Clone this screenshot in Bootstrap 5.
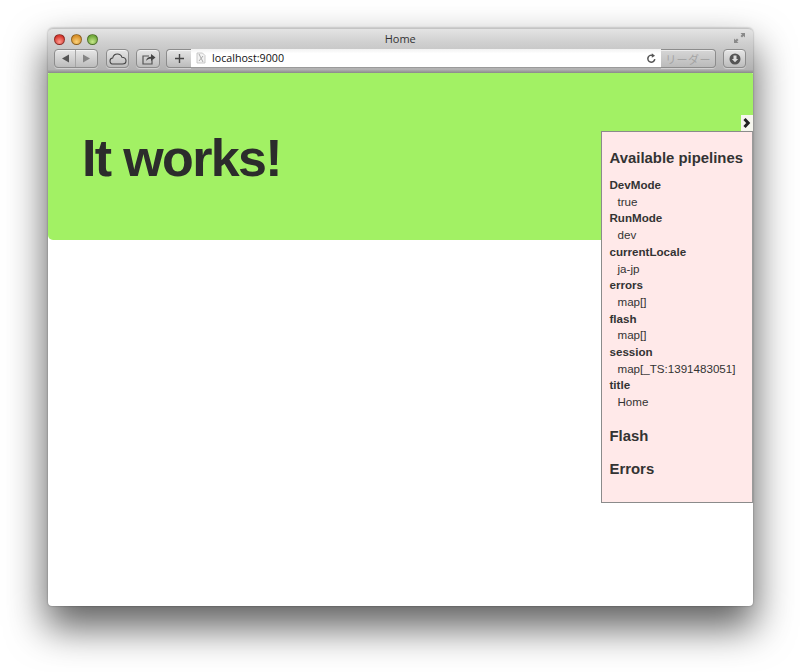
<!DOCTYPE html>
<html lang="en"><head><meta charset="utf-8"><title>Home</title>
<link rel="stylesheet" href="https://cdn.jsdelivr.net/npm/bootstrap@5.3.0/dist/css/bootstrap.min.css">
<style>
html,body{height:100%;background:#fff;overflow:hidden}
body{padding:28px 47.5px 0 47.5px;font-family:"Liberation Sans",Arial,sans-serif;color:#333}
.win{width:705px;height:578px;border-radius:5px 5px 4px 4px;box-shadow:0 20px 38px 2px rgba(0,0,0,.62),0 0 2px rgba(0,0,0,.4);background:#fff}
.chrome{height:45px;border-radius:5px 5px 0 0;background:linear-gradient(#e4e4e4,#d0d0d0 30%,#b2b2b2 92%,#8a8a8a);border-top:1px solid #c4c4c4;padding:0 6px 0 6.5px}
.titlerow{height:20px}
.light{width:11px;height:11px;border-radius:50%;border:1px solid rgba(0,0,0,.35)}
.lr{background:radial-gradient(circle at 50% 75%,#ff9c90,#d8382f 70%)}
.ly{background:radial-gradient(circle at 50% 75%,#fbd27c,#d9912a 70%)}
.lg{background:radial-gradient(circle at 50% 75%,#c6e88a,#72aa3c 70%)}
.wintitle{font:11px "Open Sans",sans-serif;color:#333;left:0;right:0;top:2px}
.lightsbox{gap:5.5px}
.toolrow{height:19px}
.tbtn{height:19px;border:1px solid #8c8c8c;border-radius:4px;background:linear-gradient(#e6e6e6,#bcbcbc);box-shadow:inset 0 1px 0 rgba(255,255,255,.55),0 1px 0 rgba(255,255,255,.4);color:#444;flex:none}
.w-nav{width:44px;margin-right:8px}
.w-cloud{width:23px;margin-right:7px}
.w-share{width:24px;margin-right:6px}
.w-plus{width:25px;border-radius:4px 0 0 4px;border-right:0}
.w-reader{width:55px;border-radius:0 4px 4px 0;color:#a4a4a4;font:11px "Noto Sans CJK JP",sans-serif;letter-spacing:.4px;border-left:0;background:linear-gradient(#d6d6d6,#bbb)}
.w-dl{width:23px;margin-left:7px}
.navsplit{border-right:1px solid #a5a5a5;height:100%}
.urlbar{width:470px;height:19px;background:linear-gradient(#f2f2f2,#fff 25%);flex:none;border-bottom:1px solid #9a9a9a;color:#222;padding:0 4px 0 5px}
.urltext{margin-left:6px;font:10.7px "Open Sans",sans-serif;color:#111}
.viewport{height:533px}
.hero{height:167px;background:#a2f164;border-radius:1px 1px 0 5px/1px 1px 0 5px;padding:59px 0 0 34.5px}
.bigtitle{font:700 52px/1 "Liberation Sans",sans-serif;color:#2c2c2c;letter-spacing:-1.65px;margin:0}
.panel{position:absolute;right:0;top:58px;width:152px;height:372px;background:#ffe9e9;border:1px solid #8b8b8b;border-right-color:#9a9a9a;padding:17px 0 0 8px;color:#333}
.toggler{position:absolute;right:0;top:42px;width:12px;height:16px;background:#f6f6ee}
.phead{font:700 14.9px/18px "Liberation Sans",sans-serif;margin:0 0 10px;color:#333}
.plist{margin:0;font-size:11.6px;line-height:16.7px}
.plist dt{font-weight:700}
.plist dd{margin:0 0 0 8px}
.phead2{margin:18.500px 0 0;height:15px;line-height:15px}
.phead3{margin-top:18px}
</style></head>
<body>
<div class="win position-relative">
  <div class="chrome">
    <div class="titlerow position-relative d-flex align-items-center">
      <div class="d-flex lightsbox"><span class="light lr"></span><span class="light ly"></span><span class="light lg"></span></div>
      <div class="wintitle position-absolute text-center">Home</div>
      <svg class="position-absolute" style="right:1px;top:3px" width="13" height="12" viewBox="0 0 13 12"><path d="M7.5 1H12V5.5L10.5 4 9 5.5 7.5 4 9 2.5ZM5.500 11H1V6.500L2.500 8 4 6.500 5.500 8 4 9.500Z" fill="#8a8a8a"/></svg>
    </div>
    <div class="toolrow d-flex align-items-center">
      <div class="tbtn w-nav d-flex align-items-center">
        <div class="navsplit w-50 d-flex align-items-center justify-content-center"><svg width="9" height="9" viewBox="0 0 9 9"><path d="M8 .5V8.500L1 4.500Z" fill="#555"/></svg></div>
        <div class="w-50 d-flex align-items-center justify-content-center"><svg width="9" height="9" viewBox="0 0 9 9"><path d="M1 .5V8.500L8 4.500Z" fill="#858585"/></svg></div>
      </div>
      <div class="tbtn w-cloud d-flex align-items-center justify-content-center"><svg width="18" height="12" viewBox="0 0 18 12"><path d="M4.500 11C2.300 11 1 9.600 1 7.900 1 6.300 2.200 5.100 3.700 5 4.200 2.700 6 1 8.400 1c2.200 0 3.900 1.300 4.500 3.200C15 4.200 17 5.700 17 7.700 17 9.700 15.400 11 13.500 11Z" fill="none" stroke="#444" stroke-width="1.100"/></svg></div>
      <div class="tbtn w-share d-flex align-items-center justify-content-center"><svg width="15" height="12" viewBox="0 0 15 12"><path d="M8 3H2V11H11V7" fill="none" stroke="#555" stroke-width="1.200"/><path d="M5 8C5.500 5 7.500 3.700 10 3.700V1L14.500 4.500 10 8V5.800C8 5.800 6.300 6.400 5 8Z" fill="#444"/></svg></div>
      <div class="tbtn w-plus d-flex align-items-center justify-content-center"><svg width="11" height="11" viewBox="0 0 11 11"><path d="M5.500 1V10M1 5.500H10" stroke="#444" stroke-width="1.400"/></svg></div>
      <div class="urlbar d-flex align-items-center">
        <svg width="10" height="12" viewBox="0 0 10 12"><path d="M1 1H6.500L9 3.500V11H1Z" fill="#f2f2f2" stroke="#bbb" stroke-width=".8"/><path d="M3 2 7 10M7 4 3 9" stroke="#aaa" stroke-width="1"/></svg>
        <span class="urltext flex-grow-1">localhost:9000</span>
        <svg width="11" height="11" viewBox="0 0 11 11"><path d="M8.800 6.200A3.500 3.500 0 1 1 7 2.600" fill="none" stroke="#555" stroke-width="1.500"/><path d="M5.800 .2 9 2.800 5.800 4.800Z" fill="#555"/></svg>
      </div>
      <div class="tbtn w-reader d-flex align-items-center justify-content-center">リーダー</div>
      <div class="tbtn w-dl d-flex align-items-center justify-content-center"><svg width="12" height="12" viewBox="0 0 12 12"><circle cx="6" cy="6" r="5.500" fill="#555"/><path d="M4.500 2.500H7.500V6H9.200L6 9.300 2.800 6H4.500Z" fill="#ddd"/></svg></div>
    </div>
  </div>
  <div class="viewport position-relative">
    <div class="hero"><h1 class="bigtitle">It works!</h1></div>
    <div class="toggler d-flex align-items-center justify-content-center"><svg width="8" height="10" viewBox="0 0 8 10"><path d="M1.500 1 5.200 5 1.500 9" fill="none" stroke="#222" stroke-width="3"/></svg></div>
    <aside class="panel">
      <h3 class="phead">Available pipelines</h3>
      <dl class="plist">
        <dt>DevMode</dt><dd>true</dd>
        <dt>RunMode</dt><dd>dev</dd>
        <dt>currentLocale</dt><dd>ja-jp</dd>
        <dt>errors</dt><dd>map[]</dd>
        <dt>flash</dt><dd>map[]</dd>
        <dt>session</dt><dd>map[_TS:1391483051]</dd>
        <dt>title</dt><dd>Home</dd>
      </dl>
      <h3 class="phead phead2">Flash</h3>
      <h3 class="phead phead2 phead3">Errors</h3>
    </aside>
  </div>
</div>
<script src="https://cdn.jsdelivr.net/npm/bootstrap@5.3.0/dist/js/bootstrap.bundle.min.js"></script>
</body></html>
